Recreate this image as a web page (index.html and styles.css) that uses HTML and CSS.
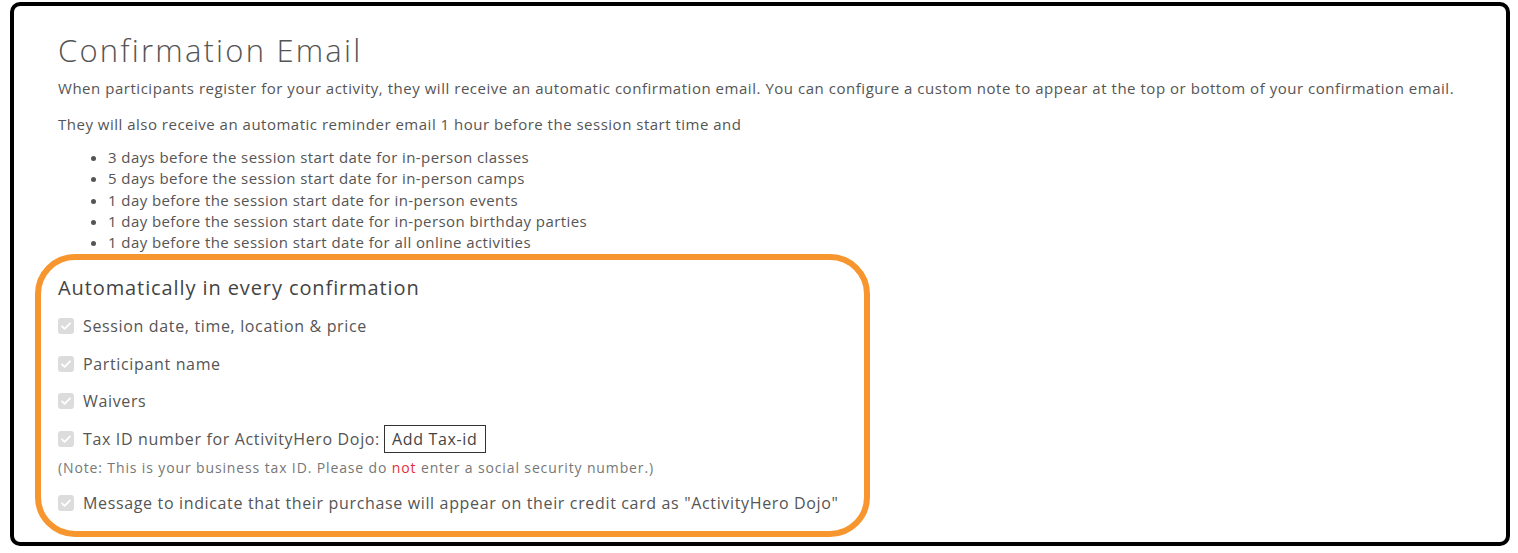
FILE: index.html
```html
<!DOCTYPE html>
<html>
<head>
<meta charset="utf-8">
<link rel="stylesheet" href="styles.css">
</head>
<body>
<div class="frame">
  <h1 class="title">Confirmation Email</h1>
  <p class="text">When participants register for your activity, they will receive an automatic confirmation email. You can configure a custom note to appear at the top or bottom of your confirmation email.</p>
  <p class="text second">They will also receive an automatic reminder email 1 hour before the session start time and</p>
  <ul class="list">
    <li>3 days before the session start date for in-person classes</li>
    <li>5 days before the session start date for in-person camps</li>
    <li>1 day before the session start date for in-person events</li>
    <li>1 day before the session start date for in-person birthday parties</li>
    <li>1 day before the session start date for all online activities</li>
  </ul>
  <div class="auto">
    <h2 class="subtitle">Automatically in every confirmation</h2>
    <div class="row first"><span class="check"><svg viewBox="0 0 16 16" width="16" height="16"><path d="M4 8.3l2.6 2.6L12 5.3" fill="none" stroke="#fff" stroke-width="1.8" stroke-linecap="round" stroke-linejoin="round"/></svg></span><span>Session date, time, location &amp; price</span></div>
    <div class="row"><span class="check"><svg viewBox="0 0 16 16" width="16" height="16"><path d="M4 8.3l2.6 2.6L12 5.3" fill="none" stroke="#fff" stroke-width="1.8" stroke-linecap="round" stroke-linejoin="round"/></svg></span><span>Participant name</span></div>
    <div class="row"><span class="check"><svg viewBox="0 0 16 16" width="16" height="16"><path d="M4 8.3l2.6 2.6L12 5.3" fill="none" stroke="#fff" stroke-width="1.8" stroke-linecap="round" stroke-linejoin="round"/></svg></span><span>Waivers</span></div>
    <div class="row"><span class="check"><svg viewBox="0 0 16 16" width="16" height="16"><path d="M4 8.3l2.6 2.6L12 5.3" fill="none" stroke="#fff" stroke-width="1.8" stroke-linecap="round" stroke-linejoin="round"/></svg></span><span>Tax ID number for ActivityHero Dojo:</span><span class="taxbtn">Add Tax-id</span></div>
    <p class="note">(Note: This is your business tax ID. Please do <span class="red">not</span> enter a social security number.)</p>
    <div class="row last"><span class="check"><svg viewBox="0 0 16 16" width="16" height="16"><path d="M4 8.3l2.6 2.6L12 5.3" fill="none" stroke="#fff" stroke-width="1.8" stroke-linecap="round" stroke-linejoin="round"/></svg></span><span>Message to indicate that their purchase will appear on their credit card as "ActivityHero Dojo"</span></div>
  </div>
</div>
</body>
</html>
```
FILE: styles.css
```css
html, body {
  margin: 0;
  padding: 0;
  background: #fff;
}
body {
  font-family: "Open Sans", "Liberation Sans", sans-serif;
  color: #555;
}
.frame {
  box-sizing: border-box;
  margin: 2px 8px 0 10px;
  height: 544px;
  border: 4px solid #000;
  border-radius: 10px;
  padding: 24px 0 0 44px;
}
.title {
  margin: 0;
  font-size: 31px;
  font-weight: 300;
  line-height: 40px;
  letter-spacing: 2.2px;
  color: #555;
}
.text {
  margin: 7px 0 0;
  font-size: 15px;
  line-height: 22px;
  letter-spacing: 0.53px;
}
.text.second {
  margin-top: 14px;
  letter-spacing: 0.5px;
}
.list {
  margin: 12px 0 0;
  padding-left: 50px;
  font-size: 15px;
  line-height: 21.3px;
  letter-spacing: 0.42px;
}
.auto {
  box-sizing: border-box;
  margin: 1px 0 0 -23px;
  width: 835px;
  border: 6px solid #f7952f;
  border-radius: 40px;
  padding: 14px 0 14px 17px;
}
.subtitle {
  margin: 0 0 10px;
  font-size: 20px;
  font-weight: 500;
  line-height: 28px;
  letter-spacing: 0.9px;
  color: #444;
}
.row {
  display: flex;
  align-items: center;
  gap: 8px;
  height: 28px;
  margin-top: 9.5px;
  font-size: 16px;
  letter-spacing: 0.65px;
}
.row.first {
  margin-top: 0;
}
.check {
  width: 16px;
  height: 16px;
  border-radius: 3px;
  background: #dcdcdc;
  display: flex;
  flex: none;
  margin-right: 1px;
}
.taxbtn {
  border: 1px solid #333;
  padding: 2px 8px 2px 7px;
  line-height: 22px;
  margin-left: -4px;
  color: #444;
}
.note {
  margin: 4px 0 0;
  font-size: 14px;
  line-height: 22px;
  letter-spacing: 0.87px;
  color: #777;
}
.red {
  color: #e0313b;
}
.row.last {
  margin-top: 10px;
}
```
